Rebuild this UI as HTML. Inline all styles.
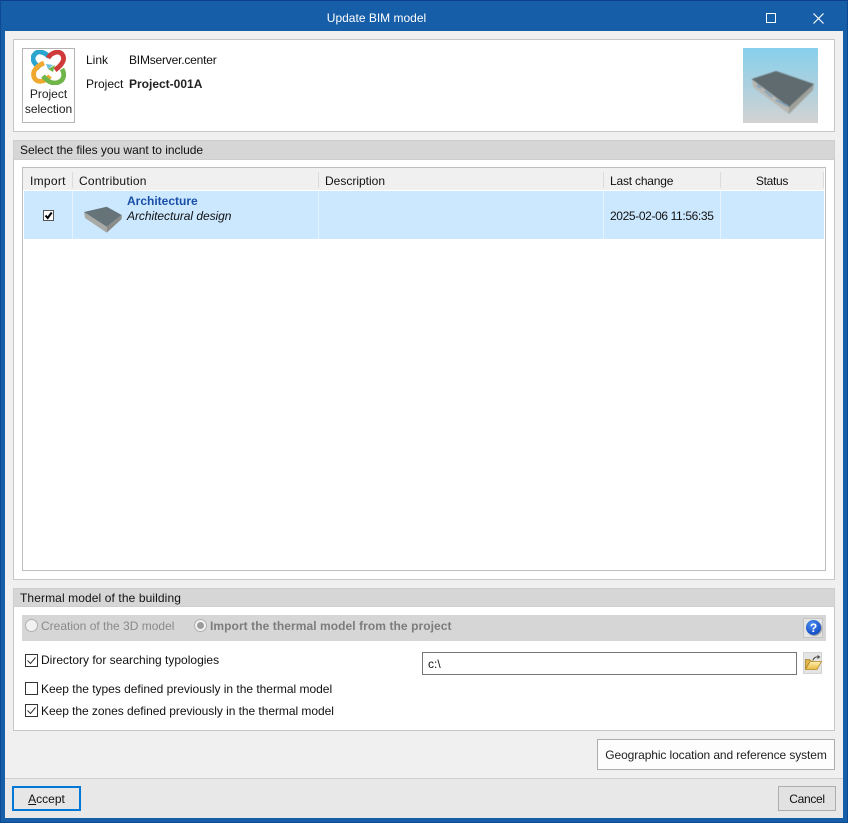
<!DOCTYPE html>
<html><head><meta charset="utf-8"><style>
html,body{margin:0;padding:0;width:848px;height:823px;overflow:hidden;background:#175ea8}
body{position:relative;font-family:"Liberation Sans",sans-serif;font-size:12px;color:#111}
div,span.a,svg{position:absolute;box-sizing:border-box}
.t{white-space:nowrap;line-height:16px;height:16px}
.cb{width:13px;height:13px;border:1px solid #333;background:#fff}
.sep{width:1px;background:#dcdcdc}
.rs{width:1px;background:#e6f3fd}
</style></head><body>
<div style="left:0;top:0;width:848px;height:823px;border:1px solid #0e4a94;border-top-color:#0e3f8c"></div>
<div class="t" style="left:0;width:753px;top:10px;text-align:center;color:#fff">Update BIM model</div>
<div style="left:766px;top:13px;width:10px;height:10px;border:1px solid #fff"></div>
<svg style="left:813px;top:13px" width="11" height="11"><path d="M.5.5l10 10M10.500.5l-10 10" stroke="#fff" stroke-width="1.200" fill="none"/></svg>
<div style="left:5px;top:31px;width:838px;height:787px;background:#f0f0f0"></div>

<div style="left:13px;top:39px;width:822px;height:93px;background:#fff;border:1px solid #c6c6c6"></div>
<div style="left:22px;top:48px;width:53px;height:75px;border:1px solid #b4b4b4;background:#fff"></div>
<svg style="left:31px;top:50px" width="35" height="35" viewBox="0 0 35 35" fill="none" stroke-width="4.800">
<path d="M18 7C14 2 7 0 4 4C0 8 2 13 9 18" stroke="#2aa5cf"/>
<path d="M13 13C6 16 1 21 3 27C5 33 13 33 19 26" stroke="#f0a92e"/>
<path d="M31 19C34 24 33 30 28 32C22 35 16 31 12 26" stroke="#6fb54a"/>
<path d="M17 8C20 3 27 0 31 4C35 9 31 15 24 20" stroke="#cf3b3b"/>
<path d="M17 19l7-4-2 7z" fill="#6fb54a"  stroke="none"/>
<path d="M17 19l5-4-7-1z" fill="#2aa5cf" stroke="none" opacity=".7"/>
</svg>
<div class="t" style="left:22px;width:53px;top:86px;text-align:center;color:#222">Project</div>
<div class="t" style="left:22px;width:53px;top:101px;text-align:center;color:#222">selection</div>
<div class="t" style="left:86px;top:52px">Link</div>
<div class="t" style="left:129px;top:52px;letter-spacing:-.2px">BIMserver.center</div>
<div class="t" style="left:86px;top:76px">Project</div>
<div class="t" style="left:129px;top:76px;font-weight:bold;color:#222">Project-001A</div>
<svg style="left:743px;top:48px;" width="75" height="75" viewBox="0 0 75 75">
<defs><linearGradient id="g" x1="0" y1="0" x2="0" y2="1"><stop offset="0" stop-color="#86cfec"/><stop offset="1" stop-color="#d2d2d2"/></linearGradient></defs>
<rect width="75" height="75" fill="url(#g)"/>
<g style="filter:blur(.4px)">
<path d="M8.700 31L46 59 46 66 10 39z" fill="#b8b8b4"/>
<path d="M46 59L71 36 70 42 46 66z" fill="#a0a09a"/>
<path d="M8.700 31L33 23 71 36 46 59z" fill="#5f6b6e"/>
<path d="M33 52l12 6M22 43l7 6M14 37l4 3" stroke="#7aa0c0" stroke-width="1.800"/>
</g>
</svg>

<div style="left:13px;top:140px;width:822px;height:440px;background:#fff;border:1px solid #c6c6c6"></div>
<div style="left:13px;top:140px;width:822px;height:20px;background:#d6d6d6;border:1px solid #cecece"></div>
<div class="t" style="left:20px;top:142px;letter-spacing:-.03px">Select the files you want to include</div>
<div style="left:22px;top:167px;width:804px;height:404px;border:1px solid #bebebe;background:#fff"></div>
<div style="left:23px;top:168px;width:801px;height:22px;background:#f0f0f0"></div>
<div style="left:24px;top:191px;width:800px;height:48px;background:#cce8ff"></div>
<div class="sep" style="left:72px;top:172px;height:16px"></div>
<div class="sep" style="left:318px;top:172px;height:16px"></div>
<div class="sep" style="left:603px;top:172px;height:16px"></div>
<div class="sep" style="left:720px;top:172px;height:16px"></div>
<div class="sep" style="left:823px;top:172px;height:16px"></div>
<div class="rs" style="left:72px;top:191px;height:48px"></div>
<div class="rs" style="left:318px;top:191px;height:48px"></div>
<div class="rs" style="left:603px;top:191px;height:48px"></div>
<div class="rs" style="left:720px;top:191px;height:48px"></div>
<div class="t" style="left:30px;top:173px;letter-spacing:.3px">Import</div>
<div class="t" style="left:79px;top:173px;letter-spacing:.25px">Contribution</div>
<div class="t" style="left:325px;top:173px">Description</div>
<div class="t" style="left:610px;top:173px;letter-spacing:-.2px">Last change</div>
<div class="t" style="left:722px;width:100px;top:173px;text-align:center;letter-spacing:-.3px">Status</div>
<div style="left:43px;top:210px;width:11px;height:11px;background:#fff;border:1px solid #555"></div>
<svg style="left:43px;top:210px" width="11" height="11"><path d="M2.500 5.500l2.200 2.500 4-5.500" stroke="#000" stroke-width="2" fill="none"/></svg>
<svg style="left:84px;top:205px" width="38" height="30" viewBox="0 0 38 30">
<g style="filter:blur(.3px)">
<path d="M0 7L22.700 21.700 22.700 27.700 1 13z" fill="#a9a9a6"/>
<path d="M22.700 21.700L37.700 10 37.700 14 22.700 27.700z" fill="#8b8b88"/>
<path d="M0 7L22.700 1.700 37.700 10 22.700 21.700z" fill="#66747a"/>
</g>
</svg>
<div class="t" style="left:127px;top:193px;font-weight:bold;color:#1a4fa8">Architecture</div>
<div class="t" style="left:127px;top:208px;font-style:italic;letter-spacing:-.05px">Architectural design</div>
<div class="t" style="left:610px;top:208px;letter-spacing:-.37px">2025-02-06 11:56:35</div>

<div style="left:13px;top:588px;width:822px;height:143px;background:#fff;border:1px solid #c6c6c6"></div>
<div style="left:13px;top:588px;width:822px;height:19px;background:#d6d6d6;border:1px solid #cecece"></div>
<div class="t" style="left:20px;top:590px;letter-spacing:.1px">Thermal model of the building</div>
<div style="left:22px;top:615px;width:804px;height:26px;background:#d6d6d6"></div>
<div style="left:25px;top:619px;width:13px;height:13px;border-radius:50%;background:#f2f2f2;border:1px solid #b0b0b0"></div>
<div class="t" style="left:41px;top:618px;color:#8a8a8a">Creation of the 3D model</div>
<div style="left:194px;top:619px;width:13px;height:13px;border-radius:50%;background:#f2f2f2;border:1px solid #b0b0b0"></div>
<div style="left:197px;top:622px;width:7px;height:7px;border-radius:50%;background:#9c9c9c"></div>
<div class="t" style="left:210px;top:618px;color:#7c7c7c;font-weight:bold;letter-spacing:.07px">Import the thermal model from the project</div>
<div style="left:803px;top:618px;width:20px;height:20px;background:#e4e4e4;border:1px solid #c4c4c4"></div>
<div style="left:806px;top:620px;width:15px;height:15px;border-radius:50%;background:radial-gradient(circle at 40% 30%,#4f8ff0,#1450c8 70%,#0d3a9c);box-shadow:1px 1px 1px #999"></div>
<div class="t" style="left:806px;width:15px;top:620px;text-align:center;color:#fff;font-weight:bold;font-size:12px">?</div>

<div class="cb" style="left:25px;top:654px"></div>
<svg style="left:25px;top:654px" width="13" height="13"><path d="M2.500 6.500l3 3 5-6" stroke="#333" fill="none"/></svg>
<div class="t" style="left:41px;top:652px">Directory for searching typologies</div>
<div class="cb" style="left:25px;top:682px"></div>
<div class="t" style="left:41px;top:681px;letter-spacing:-.02px">Keep the types defined previously in the thermal model</div>
<div class="cb" style="left:25px;top:704px"></div>
<svg style="left:25px;top:704px" width="13" height="13"><path d="M2.500 6.500l3 3 5-6" stroke="#333" fill="none"/></svg>
<div class="t" style="left:41px;top:703px;letter-spacing:-.05px">Keep the zones defined previously in the thermal model</div>
<div style="left:422px;top:652px;width:375px;height:23px;border:1px solid #767676;background:#fff"></div>
<div class="t" style="left:428px;top:656px">c:\</div>
<div style="left:803px;top:652px;width:19px;height:22px;background:#e4e4e4;border:1px solid #d4d4d4"></div>
<svg style="left:804px;top:655px" width="18" height="16" viewBox="0 0 18 16">
<defs><linearGradient id="f" x1="0" y1="0" x2="0" y2="1"><stop offset="0" stop-color="#fff0b0"/><stop offset="1" stop-color="#e8b840"/></linearGradient></defs>
<path d="M1.500 14.500V4.500h4l1 1.500h3v2H5z" fill="#e2b64e" stroke="#a87e20" stroke-width=".8"/>
<path d="M1.500 14.500L6 6.500H17.500L13 14.500z" fill="url(#f)" stroke="#b78c28" stroke-width=".8"/>
<path d="M9 5C10 2.500 12 1.500 15 2M13.500.5L15.500 2 13.500 3.500" stroke="#444" fill="none"/>
</svg>

<div style="left:597px;top:739px;width:238px;height:31px;background:#fdfdfd;border:1px solid #adadad"></div>
<div class="t" style="left:597px;width:238px;top:747px;text-align:center;color:#222;letter-spacing:-.1px">Geographic location and reference system</div>

<div style="left:5px;top:778px;width:838px;height:40px;background:#e8e8e8;border-top:1px solid #cfcfcf"></div>
<div style="left:12px;top:786px;width:69px;height:25px;background:#e6e6e6;border:2px solid #0078d7"></div>
<div class="t" style="left:12px;width:69px;top:791px;text-align:center"><u>A</u>ccept</div>
<div style="left:778px;top:786px;width:58px;height:25px;background:#e2e2e2;border:1px solid #adadad"></div>
<div class="t" style="left:778px;width:58px;top:791px;text-align:center;letter-spacing:-.3px">Cancel</div>
</body></html>
